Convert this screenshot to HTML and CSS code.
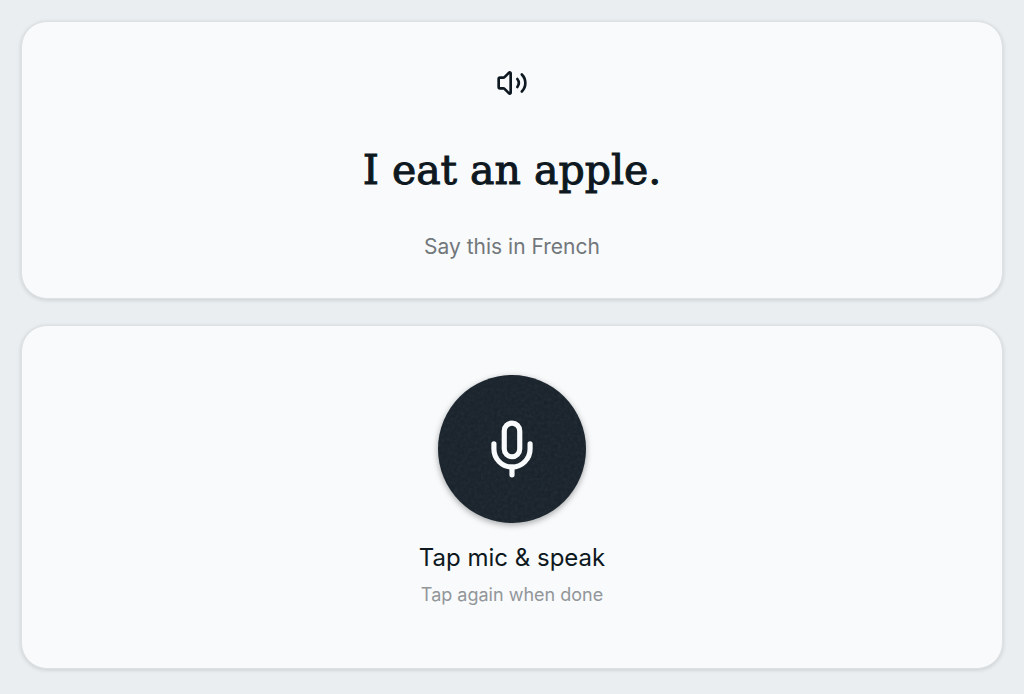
FILE: index.html
```html
<!DOCTYPE html>
<html lang="en">
<head>
    <meta charset="UTF-8">
    <meta name="viewport" content="width=device-width, initial-scale=1.0">
    <title>Speaking Practice</title>
    <link rel="stylesheet" href="styles.css">
</head>
<body>
    <main class="practice">
        <section class="card prompt">
            <button type="button" class="listen-btn" aria-label="Listen">
                <svg class="icon" viewBox="0 0 24 24" aria-hidden="true">
                    <path d="M11 4.702a.705.705 0 0 0-1.203-.498L6.413 7.587A1.4 1.4 0 0 1 5.416 8H3a1 1 0 0 0-1 1v6a1 1 0 0 0 1 1h2.416a1.4 1.4 0 0 1 .997.413l3.383 3.384A.705.705 0 0 0 11 19.298z"/>
                    <path d="M16 9a5 5 0 0 1 0 6"/>
                    <path d="M19.364 18.364a9 9 0 0 0 0-12.728"/>
                </svg>
            </button>
            <h1>I eat an apple.</h1>
            <p class="instruction">Say this in French</p>
        </section>

        <section class="card recorder">
            <button type="button" class="mic-btn" aria-labelledby="mic-label">
                <svg class="grain" aria-hidden="true">
                    <filter id="grain">
                        <feTurbulence type="fractalNoise" baseFrequency="0.3" numOctaves="3"/>
                        <feColorMatrix type="saturate" values="0"/>
                    </filter>
                    <rect width="100%" height="100%" filter="url(#grain)"/>
                </svg>
                <svg class="icon" viewBox="0 0 24 24" aria-hidden="true">
                    <path d="M12 2a3 3 0 0 0-3 3v7a3 3 0 0 0 6 0V5a3 3 0 0 0-3-3Z"/>
                    <path d="M19 10v2a7 7 0 0 1-14 0v-2"/>
                    <path d="M12 19v3"/>
                </svg>
            </button>
            <p class="mic-label" id="mic-label">Tap mic &amp; speak</p>
            <p class="mic-hint">Tap again when done</p>
        </section>
    </main>
</body>
</html>
```
FILE: styles.css
```css
* {
    box-sizing: border-box;
}
body {
    margin: 0;
    background-color: #eaeef1;
    color: #0e1820;
    font-family: Inter, "Liberation Sans", sans-serif;
}
h1, p {
    margin: 0;
}
button {
    padding: 0;
    border: none;
    color: inherit;
    cursor: pointer;
}
.practice {
    display: flex;
    flex-direction: column;
    gap: 26px;
    padding: 21px;
}
.card {
    display: flex;
    flex-direction: column;
    align-items: center;
    border: 1px solid #dee1e4;
    border-radius: 26px;
    background-color: #f8fafc;
    box-shadow: 0 1px 4px rgba(0, 0, 0, 0.14);
    text-align: center;
}
.icon {
    display: block;
    fill: none;
    stroke: currentColor;
    stroke-width: 2;
    stroke-linecap: round;
    stroke-linejoin: round;
}

/* Sentence to translate */
.prompt {
    padding: 36px 24px;
}
.listen-btn {
    padding: 9px;
    background: none;
}
.listen-btn .icon {
    width: 32px;
    height: 32px;
}
h1 {
    margin-top: 32px;
    font-family: "DejaVu Serif", serif;
    font-size: 41px;
    font-weight: 400;
    line-height: 60px;
    -webkit-text-stroke: 1px currentColor;
}
.instruction {
    margin-top: 32px;
    color: #72777b;
    font-size: 21px;
    line-height: 30px;
}

/* Microphone */
.recorder {
    padding: 49px 24px 58px;
}
.mic-btn {
    position: relative;
    display: flex;
    align-items: center;
    justify-content: center;
    width: 148px;
    height: 148px;
    border-radius: 50%;
    overflow: hidden;
    background-color: #17212a;
    color: #f8fafc;
    box-shadow: 0 2px 6px rgba(0, 0, 0, 0.35);
}
.mic-btn .icon {
    position: relative;
    width: 62px;
    height: 62px;
}
.grain {
    position: absolute;
    inset: 0;
    width: 100%;
    height: 100%;
    opacity: 0.08;
}
.mic-label {
    margin-top: 17px;
    font-size: 24px;
    line-height: 36px;
}
.mic-hint {
    margin-top: 4px;
    color: #929699;
    font-size: 18px;
    line-height: 30px;
}
```
